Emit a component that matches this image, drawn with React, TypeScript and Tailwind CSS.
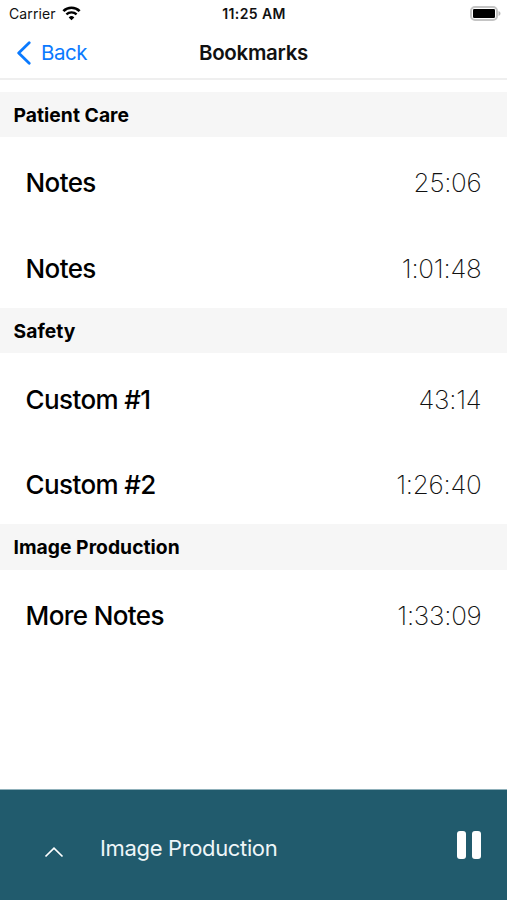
const sections = [
  {
    title: "Patient Care",
    items: [
      { name: "Notes", time: "25:06" },
      { name: "Notes", time: "1:01:48" },
    ],
  },
  {
    title: "Safety",
    items: [
      { name: "Custom #1", time: "43:14" },
      { name: "Custom #2", time: "1:26:40" },
    ],
  },
  {
    title: "Image Production",
    items: [{ name: "More Notes", time: "1:33:09" }],
  },
];

function WifiIcon() {
  return (
    <svg width="19" height="15" viewBox="0 0 19 15" fill="none">
      <path d="M1.4 5.1a11.5 11.5 0 0 1 16.2 0" stroke="#000" strokeWidth="2.7" />
      <path d="M4.4 8.4a7.2 7.2 0 0 1 10.2 0" stroke="#000" strokeWidth="2.3" />
      <path d="M9.5 14.2 6.7 11.4a4 4 0 0 1 5.6 0z" fill="#000" />
    </svg>
  );
}

function BatteryIcon() {
  return (
    <svg width="31" height="15" viewBox="0 0 31 15" fill="none">
      <rect x="1" y="1" width="26" height="13" rx="4" stroke="#c4c4c4" strokeWidth="2" />
      <rect x="3" y="3" width="22" height="9" rx="1.2" fill="#000" />
      <path d="M28.5 5v5c1.2-.4 2-1.4 2-2.5s-.8-2.1-2-2.5z" fill="#b8b8b8" />
    </svg>
  );
}

function StatusBar() {
  return (
    <div className="grid h-[27px] grid-cols-3 items-center pl-[9px] pr-[6px] text-[14px] text-[#111]">
      <div className="flex items-center gap-[6px]">
        <span className="tracking-[0.1px]">Carrier</span>
        <WifiIcon />
      </div>
      <div className="-ml-[2px] text-center text-[14px] font-semibold tracking-[0.4px]">11:25 AM</div>
      <div className="flex justify-end">
        <BatteryIcon />
      </div>
    </div>
  );
}

function NavBar() {
  return (
    <div className="grid h-[53px] grid-cols-3 items-center border-b-2 border-[#efefef] px-4">
      <button className="flex items-center gap-[9px] text-[20.5px] text-[#0a7aff]">
        <svg width="16" height="24" viewBox="0 0 16 24" fill="none">
          <path d="M13.2 1.8 2.7 12l10.5 10.2" stroke="currentColor" strokeWidth="2.8" strokeLinecap="round" strokeLinejoin="round" />
        </svg>
        <span className="pt-[2px] tracking-[-0.5px]">Back</span>
      </button>
      <h1 className="pt-[2px] text-center text-[20.5px] font-semibold tracking-[-0.3px] text-[#111]">Bookmarks</h1>
    </div>
  );
}

function Player() {
  return (
    <div className="flex h-[111px] items-center border-t border-[#8fb0ba] bg-[#215b6d] pl-[44px] pr-[26px] pt-[6px] text-white">
      <svg className="mt-[7px]" width="20" height="12" viewBox="0 0 20 12" fill="none">
        <path d="M1.5 10.5 10 2.2l8.5 8.3" stroke="#fff" strokeWidth="1.7" />
      </svg>
      <span className="ml-[36px] flex-1 text-[22px] tracking-[-0.35px] text-[#eef6f8]">Image Production</span>
      <div className="mb-[6px] flex gap-[6px]">
        <div className="h-[28px] w-[9px] rounded-[3px] bg-white" />
        <div className="h-[28px] w-[9px] rounded-[3px] bg-white" />
      </div>
    </div>
  );
}

export default function App() {
  return (
    <div className="flex h-[900px] w-[507px] flex-col overflow-hidden bg-white font-['Inter','Liberation_Sans',sans-serif]">
      <StatusBar />
      <NavBar />
      <main className="flex-1 pt-[11.7px]">
        {sections.map((section) => (
          <section key={section.title}>
            <h2 className="flex h-[45.5px] items-center bg-[#f6f6f6] pl-[13.5px] pt-[1.500px] text-[19.3px] font-bold tracking-[0.03px] text-black">
              {section.title}
            </h2>
            {section.items.map((item) => (
              <div key={item.time} className="flex h-[85.4px] items-center justify-between px-[25.5px] pt-[6px]">
                <span className="text-[26px] font-medium tracking-[-0.6px] text-black">{item.name}</span>
                <span className="text-[26px] font-extralight tracking-[-0.25px] text-[#111]">{item.time}</span>
              </div>
            ))}
          </section>
        ))}
      </main>
      <Player />
    </div>
  );
}
